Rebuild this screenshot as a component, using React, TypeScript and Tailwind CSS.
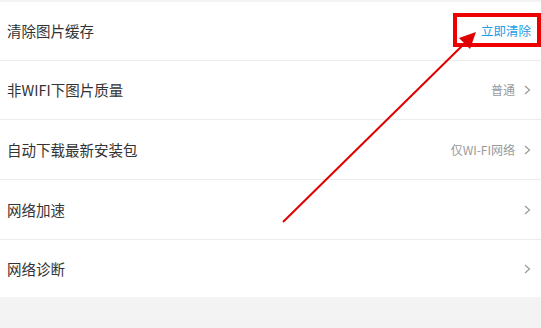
import React from "react";

const Chevron = () => (
  <svg width="7" height="10" viewBox="0 0 7 10" className="ml-[9px]">
    <path d="M1 1 L5.5 5 L1 9" fill="none" stroke="#9a9a9a" strokeWidth="1.2" />
  </svg>
);

type Row = { label: string; value?: string; blue?: boolean; chevron: boolean; h: string };

const rows: Row[] = [
  { label: "清除图片缓存", value: "立即清除", blue: true, chevron: false, h: "h-[59px]" },
  { label: "非WIFI下图片质量", value: "普通", chevron: true, h: "h-[59px]" },
  { label: "自动下载最新安装包", value: "仅WI-FI网络", chevron: true, h: "h-[60px]" },
  { label: "网络加速", chevron: true, h: "h-[60px]" },
  { label: "网络诊断", chevron: true, h: "h-[57px]" },
];

export default function App() {
  return (
    <div
      className="relative w-[541px] h-[328px] bg-[#f3f3f3] overflow-hidden"
      style={{ fontFamily: '"Noto Sans CJK SC", "Noto Sans", sans-serif' }}
    >
      <div className="mt-[2px] bg-white">
        {rows.map((r, i) => (
          <div
            key={i}
            className={`flex items-center ${r.h} pl-[7px] ${r.blue ? "pr-[10px]" : "pr-[10px]"} ${
              i < rows.length - 1 ? "border-b border-[#ececec]" : ""
            }`}
          >
            <span className="text-[14.5px] text-[#333333] flex-1">{r.label}</span>
            {r.value && (
              <span className={`${r.blue ? "text-[12.5px] text-[#1a9be6]" : "text-[12px] text-[#9a9a9a]"}`}>{r.value}</span>
            )}
            {r.chevron && <Chevron />}
          </div>
        ))}
      </div>

      <div className="absolute left-[453px] top-[13px] w-[88px] h-[34px] border-[4px] border-[#ee0000]" />
      <svg className="absolute left-0 top-0" width="541" height="328" viewBox="0 0 541 328">
        <line x1="283" y1="222" x2="466" y2="42" stroke="#e00000" strokeWidth="2" />
        <polygon points="476,32 470,49 459,38" fill="#e00000" />
      </svg>
    </div>
  );
}
